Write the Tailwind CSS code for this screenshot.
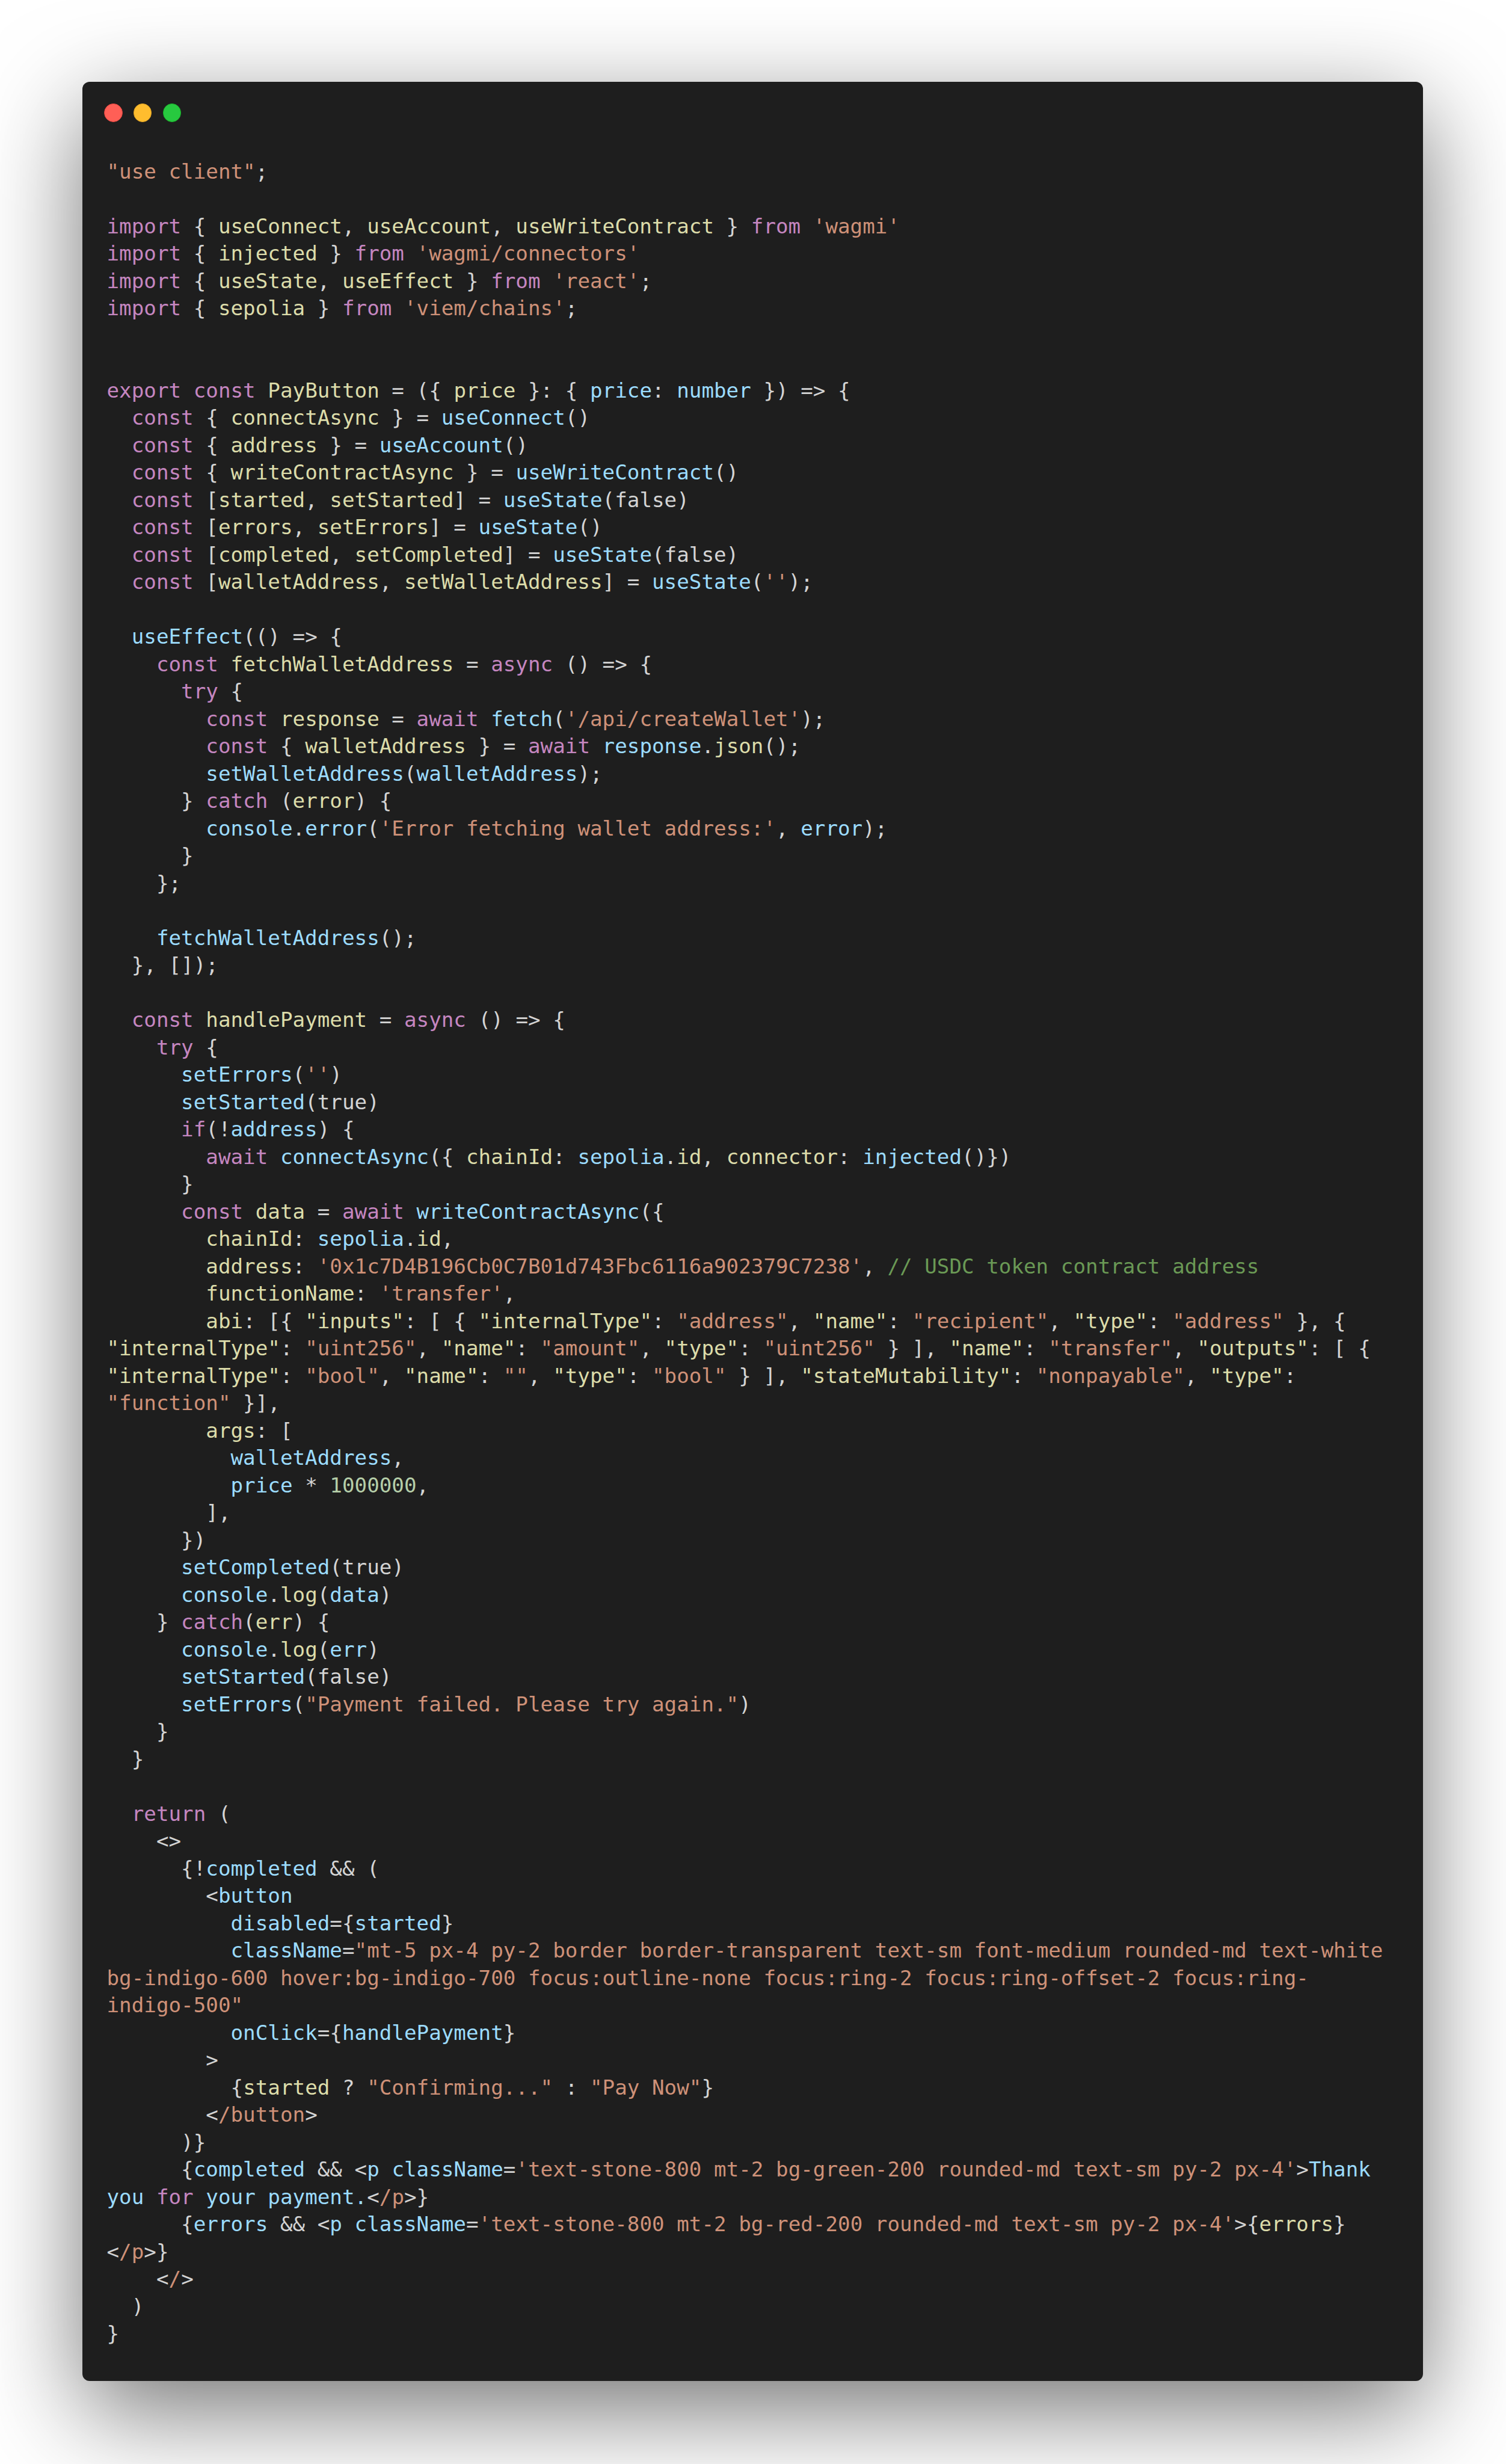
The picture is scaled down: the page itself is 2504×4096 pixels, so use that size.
<!DOCTYPE html>
<html lang="en">
<head>
<meta charset="utf-8">
<title>PayButton</title>
<script src="https://cdn.jsdelivr.net/npm/@tailwindcss/browser@4"></script>
</head>
<body class="bg-white">
<div class="h-[4096px] w-[2504px] overflow-hidden px-[137px] pt-[136px]">
<div class="flex w-[2229px] flex-col rounded-[12px] bg-[#1e1e1e] pt-[36px] pb-[55.5px] shadow-[0_49px_166px_rgba(0,0,0,0.55)]">
<div class="flex gap-[18.4px] pl-[36px]">
<div class="h-[30.5px] w-[30.5px] rounded-full border border-[#e0443e] bg-[#ff5f56]"></div>
<div class="h-[30.5px] w-[30.5px] rounded-full border border-[#dea123] bg-[#ffbd2e]"></div>
<div class="h-[30.5px] w-[30.5px] rounded-full border border-[#1aab29] bg-[#27c93f]"></div>
</div>
<pre class="mt-[60px] whitespace-pre-wrap pr-[59px] pl-[40.5px] text-[34.22px] leading-[45.5px] text-[#d4d4d4] [font-family:'DejaVu_Sans_Mono',monospace]"><span class="text-[#ce9178]">"use client"</span>;

<span class="text-[#c586c0]">import</span> { <span class="text-[#dcdcaa]">useConnect</span>, <span class="text-[#dcdcaa]">useAccount</span>, <span class="text-[#dcdcaa]">useWriteContract</span> } <span class="text-[#c586c0]">from</span> <span class="text-[#ce9178]">'wagmi'</span>
<span class="text-[#c586c0]">import</span> { <span class="text-[#dcdcaa]">injected</span> } <span class="text-[#c586c0]">from</span> <span class="text-[#ce9178]">'wagmi/connectors'</span>
<span class="text-[#c586c0]">import</span> { <span class="text-[#dcdcaa]">useState</span>, <span class="text-[#dcdcaa]">useEffect</span> } <span class="text-[#c586c0]">from</span> <span class="text-[#ce9178]">'react'</span>;
<span class="text-[#c586c0]">import</span> { <span class="text-[#dcdcaa]">sepolia</span> } <span class="text-[#c586c0]">from</span> <span class="text-[#ce9178]">'viem/chains'</span>;


<span class="text-[#c586c0]">export</span> <span class="text-[#c586c0]">const</span> <span class="text-[#dcdcaa]">PayButton</span> = ({ <span class="text-[#dcdcaa]">price</span> }: { <span class="text-[#9cdcfe]">price</span>: <span class="text-[#9cdcfe]">number</span> }) =&gt; {
  <span class="text-[#c586c0]">const</span> { <span class="text-[#dcdcaa]">connectAsync</span> } = <span class="text-[#9cdcfe]">useConnect</span>()
  <span class="text-[#c586c0]">const</span> { <span class="text-[#dcdcaa]">address</span> } = <span class="text-[#9cdcfe]">useAccount</span>()
  <span class="text-[#c586c0]">const</span> { <span class="text-[#dcdcaa]">writeContractAsync</span> } = <span class="text-[#9cdcfe]">useWriteContract</span>()
  <span class="text-[#c586c0]">const</span> [<span class="text-[#dcdcaa]">started</span>, <span class="text-[#dcdcaa]">setStarted</span>] = <span class="text-[#9cdcfe]">useState</span>(false)
  <span class="text-[#c586c0]">const</span> [<span class="text-[#dcdcaa]">errors</span>, <span class="text-[#dcdcaa]">setErrors</span>] = <span class="text-[#9cdcfe]">useState</span>()
  <span class="text-[#c586c0]">const</span> [<span class="text-[#dcdcaa]">completed</span>, <span class="text-[#dcdcaa]">setCompleted</span>] = <span class="text-[#9cdcfe]">useState</span>(false)
  <span class="text-[#c586c0]">const</span> [<span class="text-[#dcdcaa]">walletAddress</span>, <span class="text-[#dcdcaa]">setWalletAddress</span>] = <span class="text-[#9cdcfe]">useState</span>(<span class="text-[#ce9178]">''</span>);

  <span class="text-[#9cdcfe]">useEffect</span>(() =&gt; {
    <span class="text-[#c586c0]">const</span> <span class="text-[#dcdcaa]">fetchWalletAddress</span> = <span class="text-[#c586c0]">async</span> () =&gt; {
      <span class="text-[#c586c0]">try</span> {
        <span class="text-[#c586c0]">const</span> <span class="text-[#dcdcaa]">response</span> = <span class="text-[#c586c0]">await</span> <span class="text-[#9cdcfe]">fetch</span>(<span class="text-[#ce9178]">'/api/createWallet'</span>);
        <span class="text-[#c586c0]">const</span> { <span class="text-[#dcdcaa]">walletAddress</span> } = <span class="text-[#c586c0]">await</span> <span class="text-[#9cdcfe]">response</span>.<span class="text-[#dcdcaa]">json</span>();
        <span class="text-[#9cdcfe]">setWalletAddress</span>(<span class="text-[#9cdcfe]">walletAddress</span>);
      } <span class="text-[#c586c0]">catch</span> (<span class="text-[#dcdcaa]">error</span>) {
        <span class="text-[#9cdcfe]">console</span>.<span class="text-[#9cdcfe]">error</span>(<span class="text-[#ce9178]">'Error fetching wallet address:'</span>, <span class="text-[#9cdcfe]">error</span>);
      }
    };

    <span class="text-[#9cdcfe]">fetchWalletAddress</span>();
  }, []);

  <span class="text-[#c586c0]">const</span> <span class="text-[#dcdcaa]">handlePayment</span> = <span class="text-[#c586c0]">async</span> () =&gt; {
    <span class="text-[#c586c0]">try</span> {
      <span class="text-[#9cdcfe]">setErrors</span>(<span class="text-[#ce9178]">''</span>)
      <span class="text-[#9cdcfe]">setStarted</span>(true)
      <span class="text-[#c586c0]">if</span>(!<span class="text-[#9cdcfe]">address</span>) {
        <span class="text-[#c586c0]">await</span> <span class="text-[#9cdcfe]">connectAsync</span>({ <span class="text-[#dcdcaa]">chainId</span>: <span class="text-[#9cdcfe]">sepolia</span>.<span class="text-[#dcdcaa]">id</span>, <span class="text-[#dcdcaa]">connector</span>: <span class="text-[#9cdcfe]">injected</span>()})
      }
      <span class="text-[#c586c0]">const</span> <span class="text-[#dcdcaa]">data</span> = <span class="text-[#c586c0]">await</span> <span class="text-[#9cdcfe]">writeContractAsync</span>({
        <span class="text-[#dcdcaa]">chainId</span>: <span class="text-[#9cdcfe]">sepolia</span>.<span class="text-[#dcdcaa]">id</span>,
        <span class="text-[#dcdcaa]">address</span>: <span class="text-[#ce9178]">'0x1c7D4B196Cb0C7B01d743Fbc6116a902379C7238'</span>, <span class="text-[#6a9955]">// USDC token contract address</span>
        <span class="text-[#dcdcaa]">functionName</span>: <span class="text-[#ce9178]">'transfer'</span>,
        <span class="text-[#dcdcaa]">abi</span>: [{ <span class="text-[#dcdcaa]">"inputs"</span>: [ { <span class="text-[#dcdcaa]">"internalType"</span>: <span class="text-[#ce9178]">"address"</span>, <span class="text-[#dcdcaa]">"name"</span>: <span class="text-[#ce9178]">"recipient"</span>, <span class="text-[#dcdcaa]">"type"</span>: <span class="text-[#ce9178]">"address"</span> }, { <span class="text-[#dcdcaa]">"internalType"</span>: <span class="text-[#ce9178]">"uint256"</span>, <span class="text-[#dcdcaa]">"name"</span>: <span class="text-[#ce9178]">"amount"</span>, <span class="text-[#dcdcaa]">"type"</span>: <span class="text-[#ce9178]">"uint256"</span> } ], <span class="text-[#dcdcaa]">"name"</span>: <span class="text-[#ce9178]">"transfer"</span>, <span class="text-[#dcdcaa]">"outputs"</span>: [ { <span class="text-[#dcdcaa]">"internalType"</span>: <span class="text-[#ce9178]">"bool"</span>, <span class="text-[#dcdcaa]">"name"</span>: <span class="text-[#ce9178]">""</span>, <span class="text-[#dcdcaa]">"type"</span>: <span class="text-[#ce9178]">"bool"</span> } ], <span class="text-[#dcdcaa]">"stateMutability"</span>: <span class="text-[#ce9178]">"nonpayable"</span>, <span class="text-[#dcdcaa]">"type"</span>: <span class="text-[#ce9178]">"function"</span> }],
        <span class="text-[#dcdcaa]">args</span>: [
          <span class="text-[#9cdcfe]">walletAddress</span>,
          <span class="text-[#9cdcfe]">price</span> * <span class="text-[#b5cea8]">1000000</span>,
        ],
      })
      <span class="text-[#9cdcfe]">setCompleted</span>(true)
      <span class="text-[#9cdcfe]">console</span>.<span class="text-[#dcdcaa]">log</span>(<span class="text-[#9cdcfe]">data</span>)
    } <span class="text-[#c586c0]">catch</span>(<span class="text-[#dcdcaa]">err</span>) {
      <span class="text-[#9cdcfe]">console</span>.<span class="text-[#dcdcaa]">log</span>(<span class="text-[#9cdcfe]">err</span>)
      <span class="text-[#9cdcfe]">setStarted</span>(false)
      <span class="text-[#9cdcfe]">setErrors</span>(<span class="text-[#ce9178]">"Payment failed. Please try again."</span>)
    }
  }

  <span class="text-[#c586c0]">return</span> (
    &lt;&gt;
      {!<span class="text-[#9cdcfe]">completed</span> &amp;&amp; (
        &lt;<span class="text-[#9cdcfe]">button</span>
          <span class="text-[#9cdcfe]">disabled</span>={<span class="text-[#9cdcfe]">started</span>}
          <span class="text-[#9cdcfe]">className</span>=<span class="text-[#ce9178]">"mt-5 px-4 py-2 border border-transparent text-sm font-medium rounded-md text-white bg-indigo-600 hover:bg-indigo-700 focus:outline-none focus:ring-2 focus:ring-offset-2 focus:ring-indigo-500"</span>
          <span class="text-[#9cdcfe]">onClick</span>={<span class="text-[#9cdcfe]">handlePayment</span>}
        &gt;
          {<span class="text-[#dcdcaa]">started</span> ? <span class="text-[#ce9178]">"Confirming..."</span> : <span class="text-[#ce9178]">"Pay Now"</span>}
        &lt;<span class="text-[#ce9178]">/button</span>&gt;
      )}
      {<span class="text-[#9cdcfe]">completed</span> &amp;&amp; &lt;<span class="text-[#9cdcfe]">p</span> <span class="text-[#9cdcfe]">className</span>=<span class="text-[#ce9178]">'text-stone-800 mt-2 bg-green-200 rounded-md text-sm py-2 px-4'</span>&gt;<span class="text-[#9cdcfe]">Thank you</span> <span class="text-[#c586c0]">for</span> <span class="text-[#9cdcfe]">your payment.</span>&lt;<span class="text-[#ce9178]">/p</span>&gt;}
      {<span class="text-[#9cdcfe]">errors</span> &amp;&amp; &lt;<span class="text-[#9cdcfe]">p</span> <span class="text-[#9cdcfe]">className</span>=<span class="text-[#ce9178]">'text-stone-800 mt-2 bg-red-200 rounded-md text-sm py-2 px-4'</span>&gt;{<span class="text-[#dcdcaa]">errors</span>}&lt;<span class="text-[#ce9178]">/p</span>&gt;}
    &lt;<span class="text-[#ce9178]">/</span>&gt;
  )
}</pre>
</div>
</div>
</body>
</html>
